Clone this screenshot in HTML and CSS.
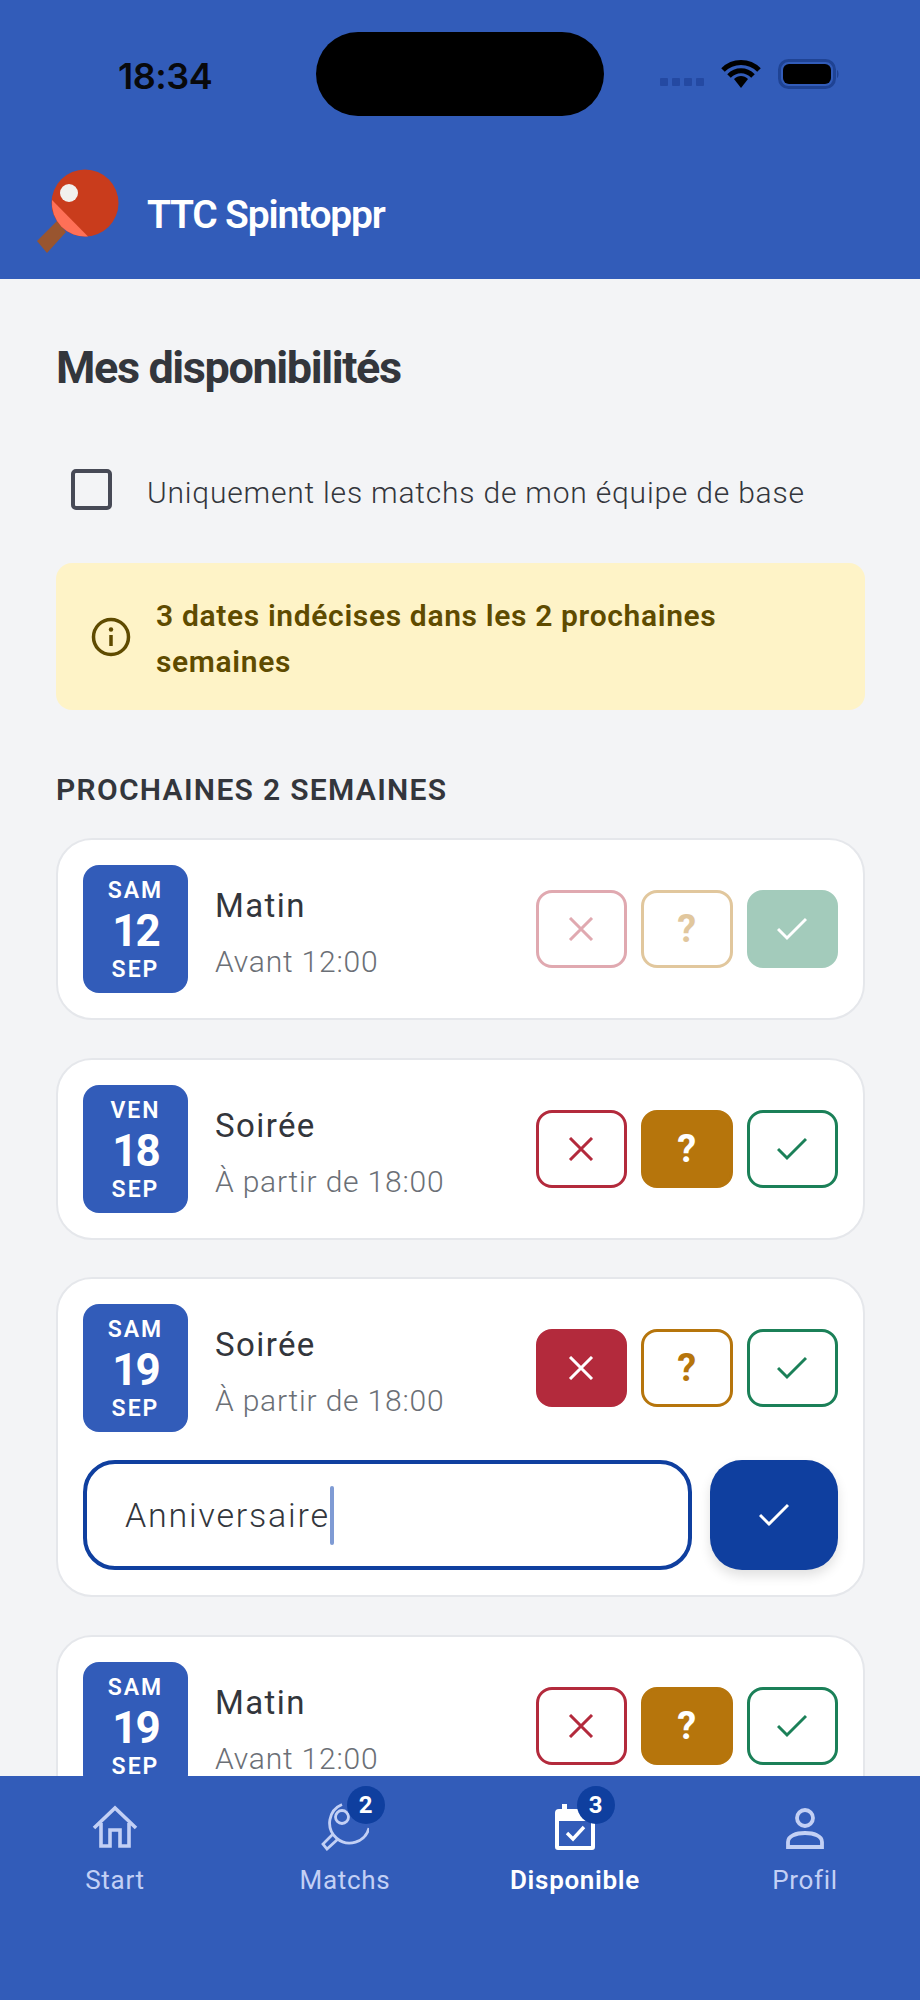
FILE: index.html
```html
<!DOCTYPE html>
<html lang="fr">
<head>
  <meta charset="UTF-8">
  <meta name="viewport" content="width=device-width, initial-scale=1">
  <title>TTC Spintoppr</title>
  <link rel="stylesheet" href="styles.css">
</head>

<body>
<svg class="sprite" xmlns="http://www.w3.org/2000/svg">
  <symbol id="i-x" viewBox="0 0 24 24"><path d="M1 1 23 23M23 1 1 23" fill="none" stroke="currentColor" stroke-width="3"/></symbol>
  <symbol id="i-check" viewBox="0 0 30 22"><path d="M1 11 10 20 29 1" fill="none" stroke="currentColor" stroke-width="3"/></symbol>
</svg>

<div class="app">
  <header class="top">
    <div class="status">
      <span class="clock">18:34</span>
      <span class="island"></span>
      <div class="status-icons">
        <span class="signal"><i></i><i></i><i></i><i></i></span>
        <svg class="wifi" viewBox="0 0 40 30"><path d="M2 11C12 1 28 1 38 11M8 17C15 10 25 10 32 17" fill="none" stroke="#000" stroke-width="5"/><path d="M13 20C17 16 23 16 27 20L20 29Z" fill="#000"/></svg>
        <svg class="battery" viewBox="0 0 62 30"><rect x="1.5" y="1.5" width="55" height="27" rx="9" fill="none" stroke="#1f4394" stroke-width="3"/><rect x="5" y="5" width="48" height="20" rx="6" fill="#000"/><path d="M59 11C61 12 61 18 59 19Z" fill="#1f4394"/></svg>
      </div>
    </div>
    <div class="brand">
      <svg class="logo" viewBox="36 168 84 86">
        <path d="M37 241 57 221 66 232 47 253Z" fill="#99552f"/>
        <circle cx="85" cy="203" r="33.5" fill="#c93c1c"/>
        <path d="M52 200 88 236.5A33.5 33.5 0 0 1 52 200Z" fill="#ff7057"/>
        <circle cx="69" cy="193" r="9" fill="#f1f1ee"/>
      </svg>
      <span class="brand-name">TTC Spintoppr</span>
    </div>
  </header>

  <main class="content">
    <h1>Mes disponibilités</h1>

    <div class="filter">
      <span class="checkbox"></span>
      <span class="filter-label">Uniquement les matchs de mon équipe de base</span>
    </div>

    <div class="notice">
      <svg class="notice-icon" viewBox="0 0 40 40"><circle cx="20" cy="20" r="17.5" fill="none" stroke="currentColor" stroke-width="3.5"/><path d="M20 18V29" stroke="currentColor" stroke-width="3.5"/><circle cx="20" cy="12.5" r="2.2" fill="currentColor"/></svg>
      <p>3 dates indécises dans les 2 prochaines semaines</p>
    </div>

    <h2>PROCHAINES 2 SEMAINES</h2>

    <div class="cards">
      <section class="card">
        <div class="row">
          <div class="date"><span class="dow">SAM</span><span class="day">12</span><span class="mon">SEP</span></div>
          <div class="slot"><div class="slot-name">Matin</div><div class="slot-time">Avant 12:00</div></div>
          <div class="choices dim">
            <span class="choice no"><svg><use href="#i-x"/></svg></span>
            <span class="choice maybe">?</span>
            <span class="choice yes on"><svg><use href="#i-check"/></svg></span>
          </div>
        </div>
      </section>

      <section class="card">
        <div class="row">
          <div class="date"><span class="dow">VEN</span><span class="day">18</span><span class="mon">SEP</span></div>
          <div class="slot"><div class="slot-name">Soirée</div><div class="slot-time">À partir de 18:00</div></div>
          <div class="choices">
            <span class="choice no"><svg><use href="#i-x"/></svg></span>
            <span class="choice maybe on">?</span>
            <span class="choice yes"><svg><use href="#i-check"/></svg></span>
          </div>
        </div>
      </section>

      <section class="card">
        <div class="row">
          <div class="date"><span class="dow">SAM</span><span class="day">19</span><span class="mon">SEP</span></div>
          <div class="slot"><div class="slot-name">Soirée</div><div class="slot-time">À partir de 18:00</div></div>
          <div class="choices">
            <span class="choice no on"><svg><use href="#i-x"/></svg></span>
            <span class="choice maybe">?</span>
            <span class="choice yes"><svg><use href="#i-check"/></svg></span>
          </div>
        </div>
        <div class="note">
          <div class="note-input"><span>Anniversaire</span><i class="caret"></i></div>
          <span class="note-send"><svg><use href="#i-check"/></svg></span>
        </div>
      </section>

      <section class="card">
        <div class="row">
          <div class="date"><span class="dow">SAM</span><span class="day">19</span><span class="mon">SEP</span></div>
          <div class="slot"><div class="slot-name">Matin</div><div class="slot-time">Avant 12:00</div></div>
          <div class="choices">
            <span class="choice no"><svg><use href="#i-x"/></svg></span>
            <span class="choice maybe on">?</span>
            <span class="choice yes"><svg><use href="#i-check"/></svg></span>
          </div>
        </div>
      </section>
    </div>
  </main>

  <nav class="tabs">
    <a class="tab">
      <span class="tab-icon">
        <svg viewBox="0 0 48 48"><path d="M3 25 24 5 45 25M10 20V43H19V27H29V43H38V20" fill="none" stroke="currentColor" stroke-width="3.6"/></svg>
      </span>
      <span>Start</span>
    </a>
    <a class="tab">
      <span class="tab-icon">
        <svg viewBox="0 0 48 48"><g fill="none" stroke="currentColor" stroke-width="2.8"><path d="M21 1.5A20 20 0 1 0 48 25"/><circle cx="21" cy="14" r="6.5"/><path d="M12 31 2 41 6 46 17 36"/></g></svg>
        <b class="badge">2</b>
      </span>
      <span>Matchs</span>
    </a>
    <a class="tab active">
      <span class="tab-icon">
        <svg viewBox="0 0 48 48"><path d="M11 1H16V6H40A4 4 0 0 1 44 10V44A3 3 0 0 1 41 47H7A3 3 0 0 1 4 44V10A4 4 0 0 1 8 6H11Z" fill="currentColor"/><rect x="8" y="18" width="32" height="25" fill="#325cb9"/><path d="M16 30 22 36 33 24" fill="none" stroke="currentColor" stroke-width="3.4"/></svg>
        <b class="badge">3</b>
      </span>
      <span>Disponible</span>
    </a>
    <a class="tab">
      <span class="tab-icon">
        <svg viewBox="0 0 48 48"><g fill="none" stroke="currentColor" stroke-width="3.8"><circle cx="24" cy="15" r="8"/><path d="M7 44V39C7 33 15 30 24 30S41 33 41 39V44Z"/></g></svg>
      </span>
      <span>Profil</span>
    </a>
  </nav>
</div>
</body>
</html>
```

FILE: styles.css
```css
* {
  box-sizing: border-box;
}

html, body {
  margin: 0;
  padding: 0;
  height: 100%;
  overflow: hidden;
}

body {
  font-family: Roboto, "Noto Sans", sans-serif;
  color: #33363c;
}

.sprite {
  display: none;
}

.app {
  display: flex;
  flex-direction: column;
  width: 920px;
  height: 2000px;
  background: #f3f4f6;
}

/* Header + status bar */
.top {
  flex: none;
  height: 279px;
  background: #325cb9;
}

.status {
  display: flex;
  align-items: center;
  height: 84px;
  margin-top: 32px;
  padding: 0 80px 0 118px;
}

.clock {
  width: 198px;
  padding-top: 3px;
  font-family: Inter, sans-serif;
  font-size: 36px;
  font-weight: 600;
  letter-spacing: -0.5px;
  color: #08090c;
}

.island {
  width: 288px;
  height: 84px;
  background: #000;
  border-radius: 42px;
}

.status-icons {
  display: flex;
  align-items: center;
  margin-left: auto;
}

.signal {
  display: flex;
  gap: 4px;
  width: 45px;
  margin-top: 15px;
}

.signal i {
  width: 8px;
  height: 8px;
  border-radius: 1px;
  background: #2449a2;
}

.wifi {
  width: 40px;
  height: 30px;
  margin-left: 16px;
}

.battery {
  width: 62px;
  height: 30px;
  margin-left: 17px;
}

.brand {
  display: flex;
  align-items: center;
  padding: 52px 0 0 36px;
}

.logo {
  width: 84px;
  height: 86px;
}

.brand-name {
  margin-left: 27px;
  margin-top: 8px;
  font-size: 39px;
  font-weight: 600;
  color: #fff;
  letter-spacing: -1.2px;
}

/* Page */
.content {
  flex: 1;
  min-height: 0;
  overflow: hidden;
  padding: 63px 55px 0 56px;
}

h1 {
  margin: 0;
  font-size: 45px;
  line-height: 52px;
  font-weight: 700;
  letter-spacing: -1.4px;
}

.filter {
  display: flex;
  align-items: center;
  gap: 35px;
  margin: 75px 0 0 15px;
  height: 41px;
  font-size: 30px;
  font-weight: 300;
  letter-spacing: 0.8px;
}

.filter-label {
  padding-top: 5px;
}

.checkbox {
  width: 41px;
  height: 41px;
  border: 4px solid #474a56;
  border-radius: 5px;
}

.notice {
  display: flex;
  align-items: center;
  margin-top: 53px;
  height: 147px;
  padding: 0 60px 0 35px;
  background: #fef3c7;
  border-radius: 16px;
  color: #5f4b00;
}

.notice-icon {
  flex: none;
  width: 40px;
  height: 40px;
}

.notice p {
  margin: 0 0 0 25px;
  padding-top: 4px;
  font-size: 30px;
  line-height: 46px;
  font-weight: 600;
  letter-spacing: 0.65px;
}

h2 {
  margin: 62px 0 30px;
  font-size: 30px;
  line-height: 36px;
  font-weight: 600;
  letter-spacing: 1.3px;
}

.cards {
  display: flex;
  flex-direction: column;
  gap: 37.5px;
}

.card {
  flex: none;
  background: #fff;
  border: 2px solid #e5e7eb;
  border-radius: 36px;
  padding: 25px;
}

.row {
  display: flex;
  align-items: flex-start;
}

.date {
  flex: none;
  display: flex;
  flex-direction: column;
  align-items: center;
  width: 105px;
  height: 128px;
  border-radius: 16px;
  background: #325cb9;
  color: #fff;
  font-weight: 600;
}

.dow, .mon {
  font-size: 23px;
  line-height: 28px;
  letter-spacing: 2px;
}

.dow {
  margin-top: 12px;
}

.day {
  margin-top: 2px;
  font-size: 44px;
  line-height: 48px;
  font-weight: 700;
  letter-spacing: -2px;
}

.mon {
  margin-top: 1px;
}

.slot {
  margin-left: 27px;
  padding-top: 21px;
}

.slot-name {
  font-size: 33px;
  line-height: 40px;
  letter-spacing: 1.4px;
}

.slot-time {
  margin-top: 16px;
  font-size: 30px;
  line-height: 40px;
  font-weight: 300;
  letter-spacing: 0.8px;
  color: #6b6f76;
}

.choices {
  display: flex;
  gap: 14px;
  margin-left: auto;
  padding-top: 25px;
}

.choices.dim {
  opacity: 0.4;
}

.choice {
  display: flex;
  align-items: center;
  justify-content: center;
  width: 91.5px;
  height: 78px;
  border: 3px solid currentColor;
  border-radius: 16px;
  background: #fff;
  font-size: 38px;
  font-weight: 700;
}

.choice svg {
  width: 30px;
  height: 24px;
}

.choice.no {
  color: #b32a3c;
}

.choice.maybe {
  color: #b6750c;
}

.choice.yes {
  color: #1b8058;
}

.choice.no.on {
  background: #b32a3c;
  border-color: #b32a3c;
  color: #fff;
}

.choice.maybe.on {
  background: #b6750c;
  border-color: #b6750c;
  color: #fff;
}

.choice.yes.on {
  background: #1b8058;
  border-color: #1b8058;
  color: #fff;
}

/* Note field under a "no" */
.note {
  display: flex;
  gap: 18px;
  margin-top: 28px;
}

.note-input {
  flex: 1;
  display: flex;
  align-items: center;
  height: 110px;
  padding-left: 38px;
  border: 4px solid #0f3f9f;
  border-radius: 32px;
  font-size: 34px;
  font-weight: 300;
  letter-spacing: 1.8px;
}

.caret {
  width: 4px;
  height: 59px;
  border-radius: 2px;
  background: #7f9bd4;
}

.note-send {
  flex: none;
  display: flex;
  align-items: center;
  justify-content: center;
  width: 128px;
  height: 110px;
  border-radius: 32px;
  background: #0f3f9f;
  color: #fff;
  box-shadow: 0 6px 12px rgba(0, 0, 0, 0.12);
}

.note-send svg {
  width: 30px;
  height: 24px;
}

/* Bottom tabs */
.tabs {
  flex: none;
  display: grid;
  grid-template-columns: repeat(4, 1fr);
  height: 224px;
  padding-top: 27px;
  background: #325cb9;
}

.tab {
  display: flex;
  flex-direction: column;
  align-items: center;
  font-size: 26px;
  letter-spacing: 0.7px;
  color: #c3d0f5;
}

.tab.active {
  color: #fff;
  font-weight: 600;
}

.tab-icon {
  position: relative;
  width: 48px;
  height: 48px;
  margin-bottom: 14px;
}

.tab-icon svg {
  display: block;
  width: 48px;
  height: 48px;
}

.badge {
  position: absolute;
  left: 26px;
  top: -17px;
  width: 38px;
  height: 38px;
  border-radius: 50%;
  background: #0f3f9f;
  color: #fff;
  font-size: 24px;
  font-weight: 700;
  line-height: 38px;
  text-align: center;
}
```
